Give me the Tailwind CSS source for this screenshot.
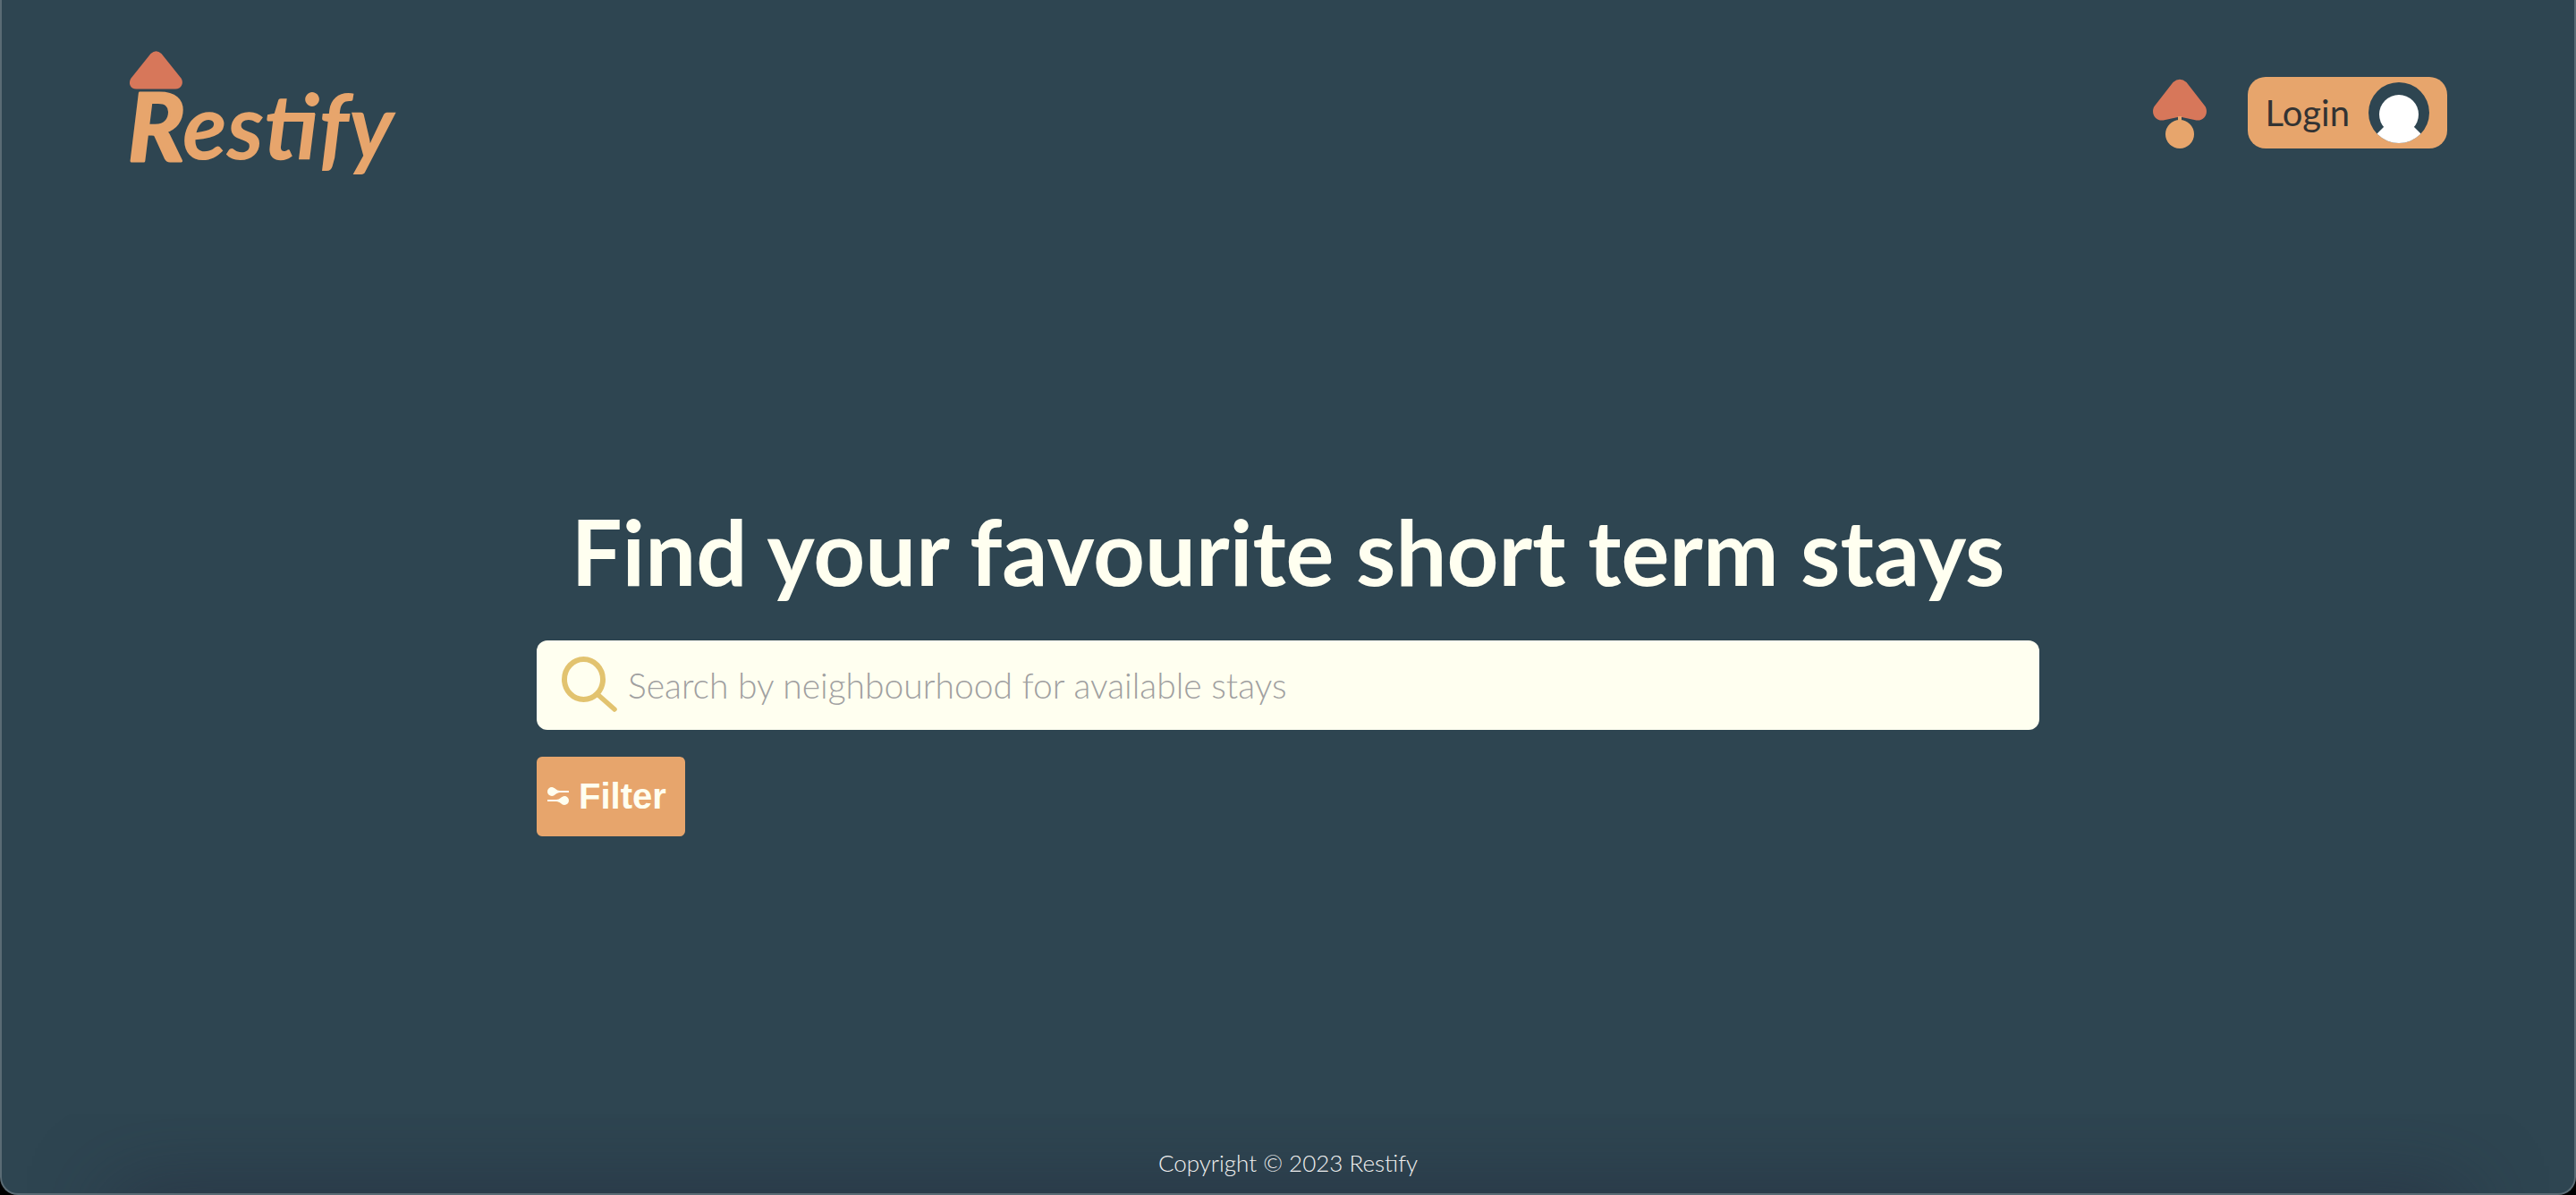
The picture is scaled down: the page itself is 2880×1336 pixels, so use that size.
<!DOCTYPE html>
<html lang="en" class="bg-black">
<head>
<meta charset="utf-8">
<meta name="viewport" content="width=device-width, initial-scale=1">
<title>Restify</title>
<script src="https://cdn.jsdelivr.net/npm/@tailwindcss/browser@4"></script>
</head>
<body class="flex min-h-screen flex-col overflow-x-hidden rounded-b-[20px] border-x-2 border-b-2 border-[#5a6b74] bg-[#2e4551] font-['Lato',sans-serif]">
  <header class="flex items-center justify-between px-[142px] py-14">
    <a href="#" aria-label="Restify home">
      <svg class="block h-[140px] w-[300px] overflow-visible" viewBox="0 0 300 140" font-family="Lato, sans-serif" font-weight="700" font-style="italic" fill="#e7a56c">
        <path fill="#d7775a" d="M24.500 4Q30.500-1.500 36.500 4L58.500 31.500C62 37 58.500 43.500 52 43.500H8.500C1.500 43.500-1 37 2.500 31.500Z"/>
        <text x="-1" y="124" font-size="106" stroke="#e7a56c" stroke-width="3" stroke-linejoin="round">R</text>
        <text x="60" y="122" font-size="102">estify</text>
        <path d="M172 70H208L207 80H172Z"/>
      </svg>
    </a>
    <nav class="flex items-center gap-[46px]">
      <a href="#" aria-label="Stays">
        <svg class="block h-20 w-[60px]" viewBox="0 -2 60 80">
          <circle cx="30" cy="62" r="16" fill="#e7a56c"/>
          <path fill="#d7775a" d="M22.500 4Q30-2.500 37.500 4L58.500 31C62.500 38 58 47.500 48.500 46.500L30 42.500L11.500 46.500C2 47.500-2.500 38 1.500 31Z"/>
          <path fill="#e7a56c" d="M28 42H32V50H28Z"/>
        </svg>
      </a>
      <button type="button" class="flex h-20 items-center gap-[21px] rounded-[20px] bg-[#e7a56c] px-5 text-[40px] text-[#333]">
        <span>Login</span>
        <svg class="block size-[68px]" viewBox="0 0 68 68">
          <defs><clipPath id="avatar"><circle cx="34" cy="34" r="34"/></clipPath></defs>
          <circle cx="34" cy="34" r="34" fill="#2e4551"/>
          <g clip-path="url(#avatar)" fill="#fff">
            <ellipse cx="34" cy="36" rx="22" ry="22"/>
            <path d="M17 50L8 59V68H60V59L51 50Z"/>
          </g>
        </svg>
      </button>
    </nav>
  </header>

  <main class="mx-auto flex w-full max-w-[1680px] flex-1 flex-col justify-center pb-2">
    <h1 class="mb-10 text-center text-[101px] leading-[120px] font-bold text-[#fffff0]">Find your favourite short term stays</h1>
    <form class="flex flex-col items-start gap-[30px]">
      <label class="flex h-[100px] w-full items-center gap-3 rounded-xl bg-[#fffff0] pl-7">
        <svg class="block h-16 w-[62px] shrink-0" viewBox="0 0 62 64" fill="none" stroke="#e2c36f" stroke-linecap="round">
          <ellipse cx="24.500" cy="25.500" rx="21.500" ry="22.500" stroke-width="6"/>
          <path d="M42 44L59 59" stroke-width="5.500"/>
          <path d="M37 46Q42 44 43.500 49L48 49L44 44Q42 42 44 38Z" fill="#e2c36f" stroke="none"/>
        </svg>
        <input type="search" aria-label="Search by neighbourhood" placeholder="Search by neighbourhood for available stays" class="h-full min-w-0 flex-1 bg-transparent text-[39px] font-light text-[#333] outline-none placeholder:text-[#a0a0a0]">
      </label>
      <button type="button" class="flex h-[89px] items-center gap-[11px] rounded-md bg-[#e7a56c] pr-[21px] pl-3 font-['Liberation_Sans',Arial,sans-serif] text-[40px] font-bold text-[#fffff0]">
        <svg class="block h-5 w-6" viewBox="0 0 24 20" fill="currentColor">
          <path d="M5 0C8 0 10 4 14 4H24V6H14C10 6 8 10 5 10A5 5 0 0 1 5 0Z"/>
          <path d="M19 10C16 10 14 14 10 14H0V16H10C14 16 16 20 19 20A5 5 0 0 0 19 10Z"/>
        </svg>
        Filter
      </button>
    </form>
  </main>

  <footer class="overflow-hidden rounded-b-[18px] text-center text-[26px] leading-8 font-light text-[#f0f0f0]">
    <p class="pt-[38px] pb-[18px]">Copyright © 2023 Restify</p>
    <div class="mx-32 -mb-20 h-20 shadow-[0_0_90px_0_rgba(36,40,58,0.6)]"></div>
  </footer>
</body>
</html>
